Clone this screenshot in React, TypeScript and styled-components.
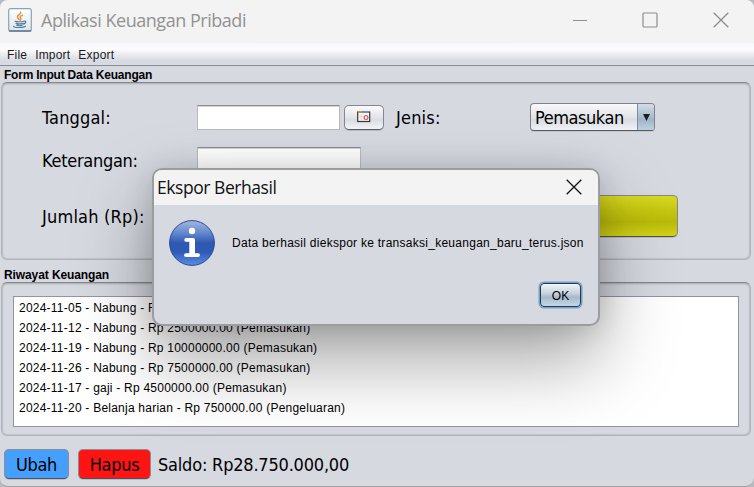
import React from 'react';
import styled, { createGlobalStyle } from 'styled-components';

const Global = createGlobalStyle`
  *, *::before, *::after { box-sizing: border-box; }
  body { margin: 0; background: #b9bac0; overflow: hidden; }
`;

const tahoma = `'DejaVu Sans Condensed', 'DejaVu Sans', sans-serif`;
const segoe = `'Open Sans', 'Noto Sans', sans-serif`;
const arial = `'Liberation Sans', Arial, sans-serif`;

const Window = styled.div`
  position: relative;
  width: 754px;
  height: 487px;
  display: flex;
  flex-direction: column;
  overflow: hidden;
  background: #d6d9e0;
  border-bottom: 1px solid #a2a3a6;
  border-radius: 8px 8px 9px 8px;
  color: #000;
  font-family: ${arial};
  font-size: 12px;
`;

const TitleBar = styled.header`
  flex: none;
  height: 43px;
  display: flex;
  align-items: center;
  padding: 0 25px 3px 8px;
  background: #f3f3f3;
`;

const AppTitle = styled.h1`
  flex: 1;
  margin: 0 0 0 9px;
  font: 400 18px/24px ${segoe};
  letter-spacing: -0.47px;
  color: #929292;
  white-space: nowrap;
`;

const WindowControls = styled.div`
  display: flex;
  align-items: center;
  gap: 55px;
`;

const MenuBar = styled.nav`
  flex: none;
  height: 23px;
  display: flex;
  align-items: center;
  gap: 8px;
  padding: 1px 7px 0;
  background: linear-gradient(#f6f7f9 0, #fdfdfe 28%, #e8eaee 55%, #d7dae1 82%, #d9dce3 100%);
  border-bottom: 1px solid #898c95;
`;

const MenuItem = styled.span`
  letter-spacing: 0.2px;
  color: #1b1b1b;
`;

const Section = styled.section`
  flex: none;
  padding: 0 3px 0 1px;
`;

const SectionTitle = styled.h2<{ $height: number; $ls: number }>`
  height: ${p => p.$height}px;
  margin: 0;
  padding-left: 3px;
  font: 700 12px/14px ${arial};
  display: flex;
  align-items: flex-end;
  letter-spacing: ${p => p.$ls}px;
`;

const Panel = styled.div<{ $height: number }>`
  height: ${p => p.$height}px;
  border: 1px solid #b2b4b9;
  border-top-color: #85878c;
  border-radius: 6px;
  box-shadow: inset 0 1px 2px #a9abb1, inset 1px 0 1px #c3c5cb, inset -1px -1px 1px #c3c5cb;
`;

const FormGrid = styled.div`
  display: grid;
  grid-template-columns: 155px 199px 134px 148px;
  grid-template-rows: 42px 43px 70px;
  align-items: center;
  padding: 13px 0 0 40px;
`;

const Label = styled.label<{ $ls: number }>`
  padding-top: 2px;
  font: 400 18px/22px ${tahoma};
  letter-spacing: ${p => p.$ls}px;
  white-space: nowrap;
`;

const FieldGroup = styled.div`
  display: flex;
  align-items: center;
  gap: 4px;
`;

const TextField = styled.input<{ $width: number }>`
  width: ${p => p.$width}px;
  height: 25px;
  padding: 0 4px;
  border: 1px solid #b9bbc0;
  border-top-color: #8b8d92;
  border-radius: 0;
  background: #fff;
  box-shadow: inset 0 1px 0 #d3d4d6;
  outline: none;
`;

const DateButton = styled.button`
  width: 40px;
  height: 25px;
  padding: 0;
  display: grid;
  place-items: center;
  border: 1px solid #85878e;
  border-bottom-color: #5a5d66;
  border-radius: 5px;
  background: linear-gradient(#fbfbfc, #e3e5e9 50%, #dadde2 60%, #f3f5f9);
  box-shadow: 0 1px 0 #b9bcc3;
`;

const Combo = styled.div`
  width: 125px;
  height: 28px;
  display: flex;
  overflow: hidden;
  border: 1px solid #7f828a;
  border-bottom-color: #565a63;
  border-radius: 4px;
  background: linear-gradient(#f8f9fa, #e2e4e8 50%, #d9dce1 60%, #f0f2f6);
  box-shadow: 0 1px 0 #c3c6cd;
`;

const ComboValue = styled.span`
  flex: 1;
  padding-left: 4px;
  font: 400 18px/28px ${tahoma};
  letter-spacing: -0.45px;
`;

const ComboArrow = styled.span`
  width: 17px;
  display: grid;
  place-items: center;
  border-left: 1px solid #7b8ea2;
  background: linear-gradient(#d3dde6, #a9bccd 50%, #9fb4c7 60%, #bdd1e2);
`;

const SaveButton = styled.button`
  grid-column: 3 / 5;
  justify-self: end;
  width: 184px;
  height: 42px;
  border: 1px solid #85878e;
  border-bottom-color: #50525a;
  border-radius: 5px;
  background: linear-gradient(#d8d920, #c6c711 35%, #b9ba09 65%, #d3d317);
  box-shadow: 0 1px 0 #b9bcc3;
`;

const HistoryPanel = styled(Panel)`
  padding: 13px 11px 8px;
`;

const HistoryList = styled.ul`
  height: 131px;
  margin: 0;
  padding: 1px 5px;
  list-style: none;
  border: 1px solid #9295a0;
  background: #fff;
`;

const HistoryItem = styled.li`
  height: 20px;
  line-height: 21px;
  letter-spacing: 0.23px;
  white-space: nowrap;
`;

const Footer = styled.footer`
  display: flex;
  align-items: center;
  padding: 13px 4px 0;
`;

const ActionButton = styled.button<{ $color: string; $width: number }>`
  width: ${p => p.$width}px;
  height: 30px;
  margin-right: 9px;
  padding: 2px 0 0;
  border: 1px solid #8c8d94;
  border-bottom-color: #4f525a;
  border-radius: 5px;
  background: ${p => p.$color};
  box-shadow: 0 1px 0 #b9bcc3;
  font: 400 18px/24px ${tahoma};
  letter-spacing: -0.3px;
  color: #000;
`;

const Balance = styled.span`
  margin-left: -2px;
  padding-top: 2px;
  font: 400 18px/24px ${tahoma};
  letter-spacing: -0.2px;
`;

const Dialog = styled.div`
  position: absolute;
  left: 152px;
  top: 168px;
  width: 448px;
  height: 158px;
  display: flex;
  flex-direction: column;
  overflow: hidden;
  border: 2px solid #9b9c9f;
  border-radius: 10px;
  background: #d6d9e0;
  box-shadow: 0 34px 76px rgba(0, 0, 0, 0.36), 0 2px 28px rgba(0, 0, 0, 0.14);
`;

const DialogTitle = styled.div`
  height: 35px;
  display: flex;
  align-items: center;
  justify-content: space-between;
  padding: 0 16px 2px 3px;
  background: #f3f3f3;
  font: 400 17.5px/24px ${segoe};
  letter-spacing: -0.45px;
  color: #111;
`;

const DialogBody = styled.div`
  display: flex;
  align-items: center;
  gap: 17px;
  padding: 15px 0 0 15px;
`;

const Message = styled.span`
  letter-spacing: 0.27px;
  white-space: nowrap;
`;

const OkButton = styled.button`
  align-self: flex-end;
  width: 41px;
  height: 24px;
  margin: 17px 17px 0 0;
  padding: 1px 0 0;
  border: 1px solid #28394e;
  border-radius: 4px;
  background: linear-gradient(#f0f4f7, #c3d0db 45%, #a5b9c9 60%, #c4d7e6);
  box-shadow: 0 0 0 1.5px #72a1cd;
  font: 400 12px/20px ${arial};
  color: #000;
`;

const JavaIcon = () => (
  <svg width="24" height="24" viewBox="0 0 24 24">
    <defs>
      <linearGradient id="javaTile" x1="0" y1="0" x2="0" y2="1">
        <stop offset="0" stopColor="#fff" />
        <stop offset="1" stopColor="#dde4ea" />
      </linearGradient>
    </defs>
    <rect x="0.7" y="0.7" width="22.6" height="22.6" rx="2" fill="url(#javaTile)" stroke="#8ba2b4" strokeWidth="1.2" />
    <path d="M1 22.8h22" stroke="#52748e" strokeWidth="1.2" />
    <g fill="none" strokeLinecap="round">
      <path d="M12.7 4.2c.8 2-4.6 3.2-3.1 5.5.4.7 1.3 1.3 1.6 2.1M14.5 7.3c-2.8 1-2.7 2-1.8 3 .5.6.1 1.1-.2 1.6" stroke="#ee8a35" strokeWidth="1.4" />
      <path d="M7 13.3c1.8.7 7 .6 8.7-.1M8 15.4c2 .6 5.2.6 7 0M8.8 17.2c1.8.5 3.8.5 5.3 0M16 13.2c2.6-.6 2.2 2.3-.4 2.9M5.5 18.4c1.2 1.5 10 1.5 12-.1" stroke="#4d7896" strokeWidth="1.2" />
    </g>
  </svg>
);

const CloseIcon = ({ color }: { color: string }) => (
  <svg width="16" height="16" viewBox="0 0 16 16">
    <path d="M.7.7l14.6 14.6M15.3.7L.7 15.3" stroke={color} strokeWidth="1.3" />
  </svg>
);

const CalendarIcon = () => (
  <svg width="14" height="12" viewBox="0 0 14 12">
    <rect x=".7" y="1" width="12" height="9.5" fill="#f4f4f4" stroke="#36373b" strokeWidth="1.2" />
    <path d="M1 1h4" stroke="#dda245" strokeWidth="1.2" />
    <path d="M6 1h6" stroke="#6f9dd0" strokeWidth="1.2" />
    <path d="M4.2 3v7M1.5 5.5h5" stroke="#dcdcdc" />
    <circle cx="9" cy="6.5" r="1.9" fill="#fff" stroke="#e5595a" strokeWidth="1.2" />
  </svg>
);

const InfoIcon = () => (
  <svg width="46" height="46" viewBox="0 0 46 46">
    <defs>
      <linearGradient id="infoFill" x1="0" y1="0" x2="0" y2="1">
        <stop offset="0" stopColor="#a3b8e2" />
        <stop offset="0.3" stopColor="#5d83cb" />
        <stop offset="0.5" stopColor="#3058af" />
        <stop offset="0.7" stopColor="#2e5ab6" />
        <stop offset="1" stopColor="#5d8ce8" />
      </linearGradient>
    </defs>
    <circle cx="23" cy="23" r="22.4" fill="url(#infoFill)" stroke="#2a4b92" strokeWidth="1" />
    <circle cx="23" cy="11" r="3.2" fill="#fff" />
    <path d="M17.2 18H24q2 0 2 2v13.2h3q2 0 2 1.900t-2 1.900H17q-2 0-2-1.900t2-1.900h3.300v-11.400h-3.100q-1.900 0-1.900-1.900T17.200 18Z" fill="#fff" />
  </svg>
);

const history = [
  '2024-11-05 - Nabung - Rp 5000000.00 (Pemasukan)',
  '2024-11-12 - Nabung - Rp 2500000.00 (Pemasukan)',
  '2024-11-19 - Nabung - Rp 10000000.00 (Pemasukan)',
  '2024-11-26 - Nabung - Rp 7500000.00 (Pemasukan)',
  '2024-11-17 - gaji - Rp 4500000.00 (Pemasukan)',
  '2024-11-20 - Belanja harian - Rp 750000.00 (Pengeluaran)',
];

export default function App() {
  return (
    <>
      <Global />
      <Window>
        <TitleBar>
          <JavaIcon />
          <AppTitle>Aplikasi Keuangan Pribadi</AppTitle>
          <WindowControls>
            <svg width="16" height="16" viewBox="0 0 16 16"><path d="M2 8.500h15" stroke="#8d8d8d" /></svg>
            <svg width="16" height="16" viewBox="0 0 16 16"><rect x="1" y="1" width="14" height="14" rx="1" fill="none" stroke="#8d8d8d" strokeWidth="1.200" /></svg>
            <CloseIcon color="#8d8d8d" />
          </WindowControls>
        </TitleBar>
        <MenuBar>
          <MenuItem>File</MenuItem>
          <MenuItem>Import</MenuItem>
          <MenuItem>Export</MenuItem>
        </MenuBar>
        <Section>
          <SectionTitle $height={16} $ls={-0.22}>Form Input Data Keuangan</SectionTitle>
          <Panel $height={178}>
            <FormGrid>
              <Label $ls={0.15}>Tanggal:</Label>
              <FieldGroup>
                <TextField $width={143} />
                <DateButton aria-label="Tanggal"><CalendarIcon /></DateButton>
              </FieldGroup>
              <Label $ls={0.2}>Jenis:</Label>
              <Combo>
                <ComboValue>Pemasukan</ComboValue>
                <ComboArrow>
                  <svg width="7" height="7" viewBox="0 0 7 7"><path d="M0 0h7L3.500 7Z" fill="#1d1f24" /></svg>
                </ComboArrow>
              </Combo>
              <Label $ls={-0.28}>Keterangan:</Label>
              <TextField $width={164} />
              <span />
              <span />
              <Label $ls={0.2}>Jumlah (Rp):</Label>
              <TextField $width={164} />
              <SaveButton aria-label="Tambah" />
            </FormGrid>
          </Panel>
        </Section>
        <Section>
          <SectionTitle $height={22} $ls={-0.1}>Riwayat Keuangan</SectionTitle>
          <HistoryPanel $height={154}>
            <HistoryList>
              {history.map(item => <HistoryItem key={item}>{item}</HistoryItem>)}
            </HistoryList>
          </HistoryPanel>
        </Section>
        <Footer>
          <ActionButton $color="#449fff" $width={65}>Ubah</ActionButton>
          <ActionButton $color="#ff1414" $width={73}>Hapus</ActionButton>
          <Balance>Saldo: Rp28.750.000,00</Balance>
        </Footer>
        <Dialog role="dialog">
          <DialogTitle>
            <span>Ekspor Berhasil</span>
            <CloseIcon color="#111" />
          </DialogTitle>
          <DialogBody>
            <InfoIcon />
            <Message>Data berhasil diekspor ke transaksi_keuangan_baru_terus.json</Message>
          </DialogBody>
          <OkButton>OK</OkButton>
        </Dialog>
      </Window>
    </>
  );
}
